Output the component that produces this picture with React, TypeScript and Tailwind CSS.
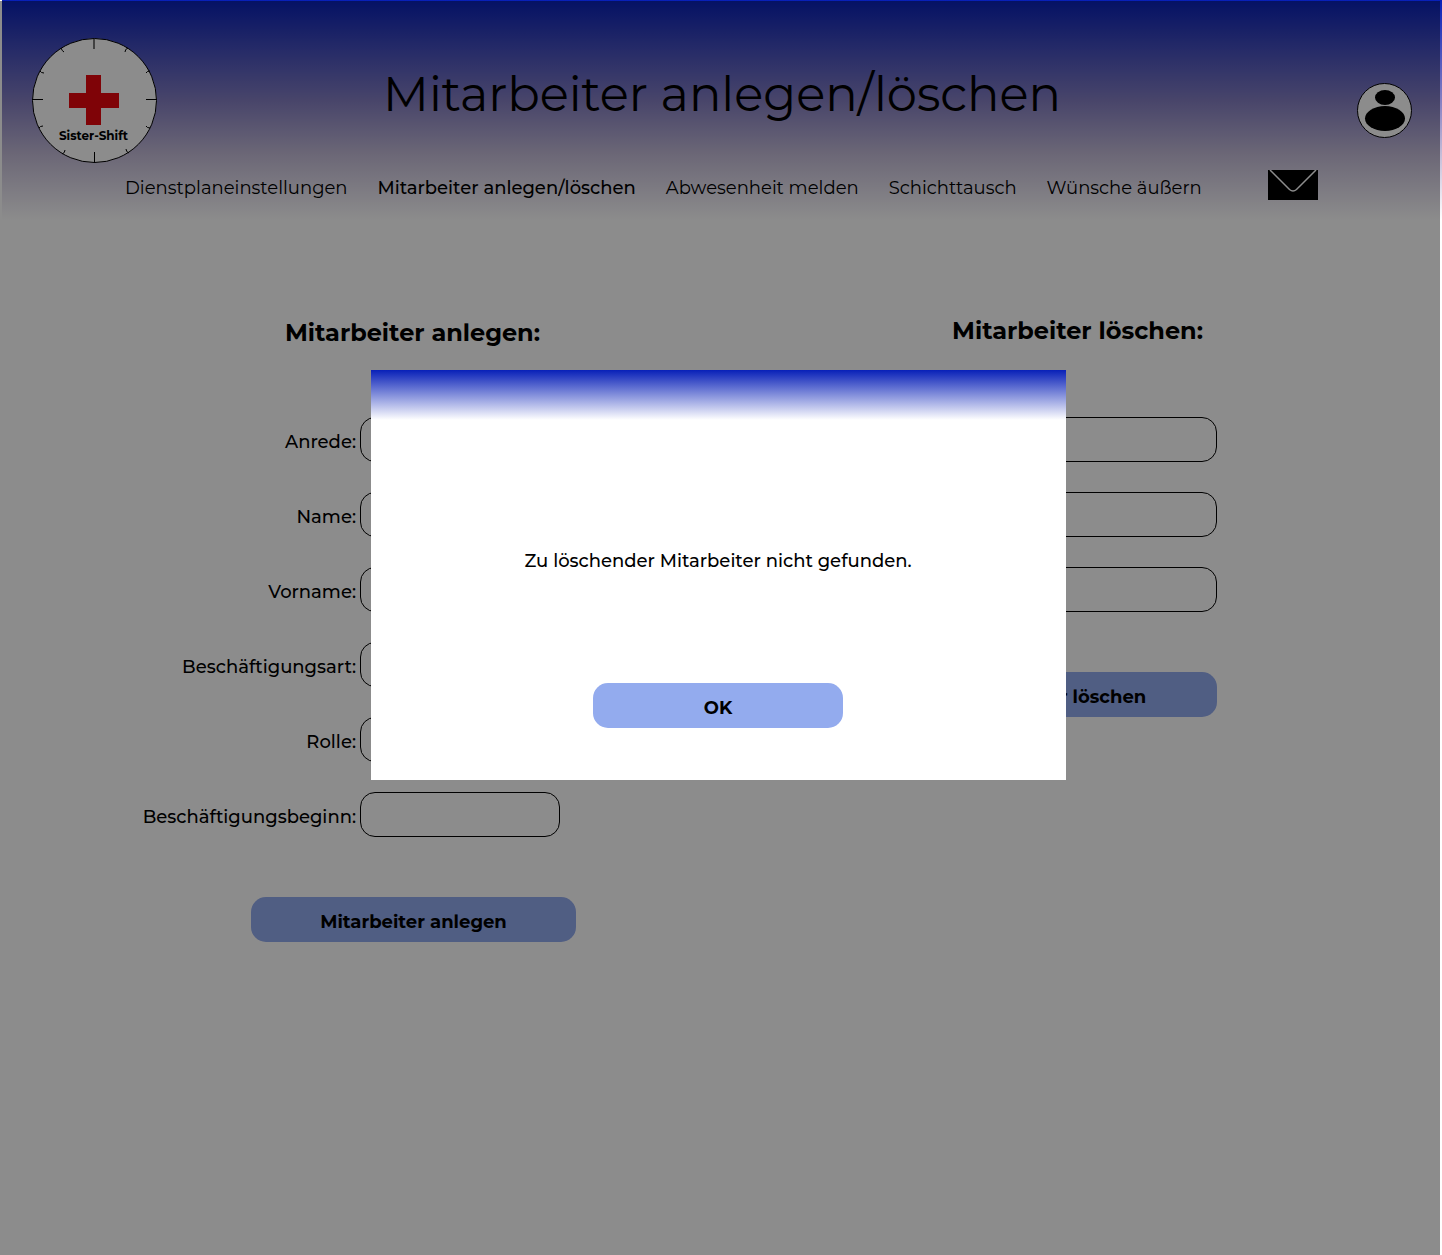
import React from 'react';

const FONT = "font-['Montserrat','Inter',sans-serif]";

function Logo() {
  return (
    <svg viewBox="0 0 125 125" className="size-[125px] shrink-0" role="img" aria-label="Sister-Shift">
      <circle cx="62.5" cy="62.5" r="62" fill="#fff" stroke="#000" />
      <path d="M0 61.5H11M114 61.5H125M62.5 114V125" stroke="#000" />
      <path d="M62 1V11" stroke="#777" strokeWidth="2" />
      <path
        d="M29 10q1 3 3 4M96 10q-3 1-3 4M8 33q1 2 4 2M118 33q-3 0-4 2M7 90q1-2 4-2M118 90q-3 0-4-2M30 116q3-1 3-4M97 115q-3-1-3-4"
        stroke="#000"
        fill="none"
      />
      <path d="M54 37h15v18h18v15h-18v17h-15v-17h-17v-15h17z" fill="#e8070d" />
      <text x="61.5" y="102" textAnchor="middle" className="font-['Montserrat','Inter',sans-serif] text-[12px] font-bold">
        Sister-Shift
      </text>
    </svg>
  );
}

function Avatar() {
  return (
    <svg viewBox="0 0 55 55" className="size-[55px]" aria-hidden="true">
      <circle cx="27.5" cy="27.5" r="27" fill="#fff" stroke="#000" />
      <ellipse cx="28" cy="14.5" rx="10" ry="7.5" />
      <ellipse cx="28" cy="35.5" rx="20" ry="12.5" />
    </svg>
  );
}

function Envelope() {
  return (
    <svg viewBox="0 0 50 30" className="h-[30px] w-[50px]" aria-hidden="true">
      <rect width="50" height="30" />
      <path d="M2 0L21.500 19.500Q25 22.500 28.500 19.500L48 0" fill="none" stroke="#fff" strokeWidth="1.500" />
    </svg>
  );
}

const links = [
  'Dienstplaneinstellungen',
  'Mitarbeiter anlegen/löschen',
  'Abwesenheit melden',
  'Schichttausch',
  'Wünsche äußern',
];

function Header() {
  return (
    <header className="ml-0.5 h-[220px] bg-[linear-gradient(to_bottom,#0820b8_0%,#857fc2_46%,#c4bcd8_70%,#ffffff_100%)] px-[30px] pt-[38px]">
      <div className="flex justify-between">
        <Logo />
        <h1 className="pt-[26px] text-[48px] leading-[60px] font-normal whitespace-nowrap">Mitarbeiter anlegen/löschen</h1>
        <div className="flex w-[125px] justify-end pt-[45px]">
          <button type="button" aria-label="Profil" className="size-[55px]">
            <Avatar />
          </button>
        </div>
      </div>
      <div className="mt-[7px] flex items-center justify-between pr-[94px] pl-[93px]">
        <nav className="flex gap-[30px] pt-1.5 text-[18px] leading-6 whitespace-nowrap">
          {links.map((label, i) => (
            <a key={label} href="#" aria-current={i === 1 ? 'page' : undefined} className={i === 1 ? 'font-medium' : 'font-normal'}>
              {label}
            </a>
          ))}
        </nav>
        <button type="button" aria-label="Nachrichten" className="h-[30px]">
          <Envelope />
        </button>
      </div>
    </header>
  );
}

function Field({ id, label }: { id: string; label: string }) {
  return (
    <div className="flex items-center justify-end gap-1">
      <label htmlFor={id} className="pt-1 text-[18px] leading-6 font-medium whitespace-nowrap">
        {label}
      </label>
      <input id={id} type="text" className="h-[45px] w-[200px] rounded-[15px] border border-black bg-white px-3" />
    </div>
  );
}

const actionButton = 'h-[45px] rounded-[15px] bg-[#93abee] pt-1 text-[18px] leading-6 font-bold';

export default function App() {
  return (
    <div className={`${FONT} relative min-h-screen bg-white text-black`}>
      <Header />
      <main className="flex justify-between pr-[225px] pl-[140px]">
        <form className="flex w-[420px] flex-col pt-[97px]">
          <h2 className="mr-5 self-end text-[24px] leading-8 font-bold">Mitarbeiter anlegen:</h2>
          <div className="mt-[68px] flex flex-col gap-[30px]">
            <Field id="anrede" label="Anrede:" />
            <Field id="name" label="Name:" />
            <Field id="vorname" label="Vorname:" />
            <Field id="art" label="Beschäftigungsart:" />
            <Field id="rolle" label="Rolle:" />
            <Field id="beginn" label="Beschäftigungsbeginn:" />
          </div>
          <button type="button" className={`${actionButton} -mr-4 mt-[60px] w-[325px] self-end`}>
            Mitarbeiter anlegen
          </button>
        </form>
        <form className="flex flex-col items-end pt-[95px]">
          <h2 className="mr-3.5 text-[24px] leading-8 font-bold">Mitarbeiter löschen:</h2>
          <div className="mt-[70px] flex flex-col gap-[30px]">
            <Field id="del-name" label="Name:" />
            <Field id="del-vorname" label="Vorname:" />
            <Field id="del-id" label="ID:" />
          </div>
          <button type="button" className={`${actionButton} mt-[60px] w-[325px]`}>
            Mitarbeiter löschen
          </button>
        </form>
      </main>

      <div className="absolute top-px right-0.5 bottom-0 left-0 flex items-start justify-center bg-black/45 pt-[369px] pr-1">
        <div role="dialog" aria-modal="true" aria-label="Hinweis" className="flex h-[410px] w-[695px] flex-col items-center bg-white">
          <div className="h-[50px] w-full bg-[linear-gradient(to_bottom,#0820b8,#ffffff)]" />
          <p className="mt-[129px] text-[18px] leading-6 font-medium">Zu löschender Mitarbeiter nicht gefunden.</p>
          <button type="button" className={`${actionButton} mt-[110px] w-[250px]`}>
            OK
          </button>
        </div>
      </div>
    </div>
  );
}
